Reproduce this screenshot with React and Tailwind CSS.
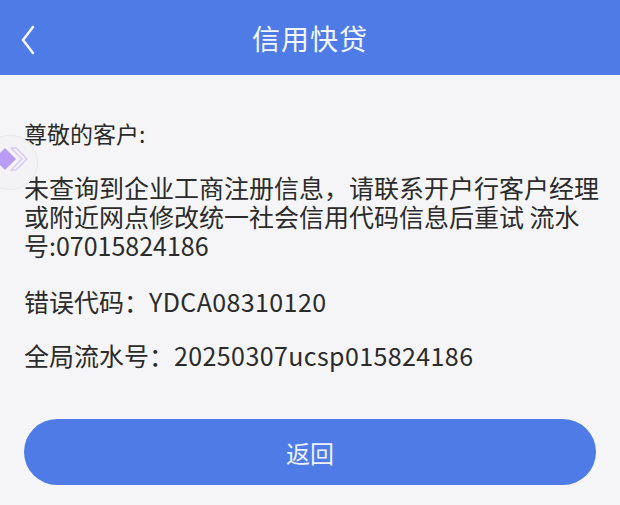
export default function App() {
  const font = { fontFamily: '"Noto Sans CJK SC", "Noto Sans", sans-serif' };

  return (
    <div className="relative flex h-[505px] w-[620px] flex-col overflow-hidden bg-[#f5f5f7] text-[#2b2b2b]" style={font}>
      <header className="relative flex h-[75px] shrink-0 items-center justify-center bg-[#4e7be6]">
        <button className="absolute left-[20px] top-[24px]">
          <svg width="16" height="32" viewBox="0 0 16 32" fill="none">
            <path d="M13 3 L3 16 L13 29" stroke="#f0f4ff" strokeWidth="2.6" strokeLinecap="round" strokeLinejoin="round" />
          </svg>
        </button>
        <h1 className="text-[28px] leading-none tracking-[1px] text-[#f3f6ff]">信用快贷</h1>
      </header>

      <main className="flex flex-1 flex-col pl-[24px] pr-[20px] pt-[44px] text-[25px] leading-[29px]">
        <p className="text-[23px]">尊敬的客户:</p>
        <p className="mt-[25px]">
          未查询到企业工商注册信息，请联系开户行客户经理或附近网点修改统一社会信用代码信息后重试 流水号:07015824186
        </p>
        <p className="mt-[27px]">错误代码：<span className="tracking-[0.4px]">YDCA08310120</span></p>
        <p className="mt-[25px]">全局流水号：<span className="tracking-[0.4px]">20250307ucsp015824186</span></p>

        <button className="mr-[4px] mt-[49px] flex h-[66px] items-center justify-center rounded-full bg-[#4e7be6] text-[24px] text-[#eef2ff]">
          返回
        </button>
      </main>

      <div className="absolute left-[-18px] top-[135px] h-[55px] w-[56px] rounded-full border border-[#e8e8ec] bg-[#f3f3f5]" />
      <svg className="absolute left-0 top-[145px]" width="32" height="30" viewBox="0 0 32 30" fill="none">
        <path d="M5 3 L16 14 L5 25 L-6 14 Z" fill="#b99cf5" />
        <path d="M11 3 L16 3 L27 14 L16 25 L11 25 L22 14 Z" fill="#f7f4fd" stroke="#d8c8f6" strokeWidth="1.5" strokeLinejoin="round" />
      </svg>
    </div>
  );
}
